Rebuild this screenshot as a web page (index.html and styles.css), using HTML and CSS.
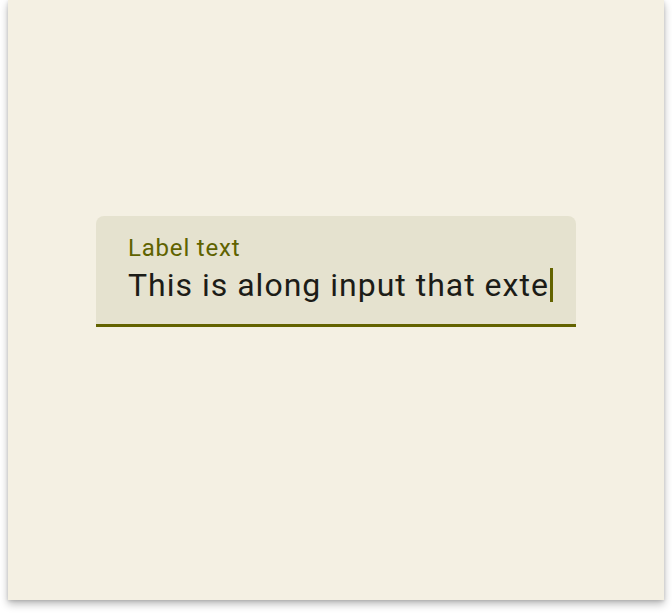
FILE: index.html
```html
<!DOCTYPE html>
<html>
<head>
<meta charset="utf-8">
<link rel="stylesheet" href="styles.css">
</head>
<body>
<div class="page">
  <div class="card">
    <div class="field">
      <div class="label">Label text</div>
      <div class="input"><span class="value">This is along input that exte</span><span class="caret"></span></div>
    </div>
  </div>
</div>
</body>
</html>
```
FILE: styles.css
```css
html, body {
  margin: 0;
  padding: 0;
  background: #ffffff;
}
.page {
  padding: 0 8px 16px 8px;
}
.card {
  width: 656px;
  height: 600px;
  box-sizing: border-box;
  background: #f4f0e3;
  box-shadow: 0 4px 8px rgba(0, 0, 0, 0.28), 0 1px 3px rgba(0, 0, 0, 0.12);
  display: flex;
  flex-direction: column;
  align-items: center;
  padding-top: 216px;
}
.field {
  width: 480px;
  box-sizing: border-box;
  background: #e5e2cf;
  border-radius: 8px 8px 0 0;
  border-bottom: 3px solid #636300;
  padding: 16px 16px 19px 32px;
  display: flex;
  flex-direction: column;
  font-family: Roboto, "Noto Sans", sans-serif;
}
.label {
  font-size: 24px;
  line-height: 32px;
  color: #5f6200;
  letter-spacing: 0.8px;
}
.input {
  margin-top: 1px;
  font-size: 32px;
  line-height: 40px;
  color: #1c1c17;
  letter-spacing: 1px;
  display: flex;
  align-items: center;
  white-space: nowrap;
  overflow: hidden;
}
.caret {
  display: inline-block;
  flex: none;
  width: 3px;
  height: 34px;
  background: #636300;
  margin-left: 1px;
}
```
